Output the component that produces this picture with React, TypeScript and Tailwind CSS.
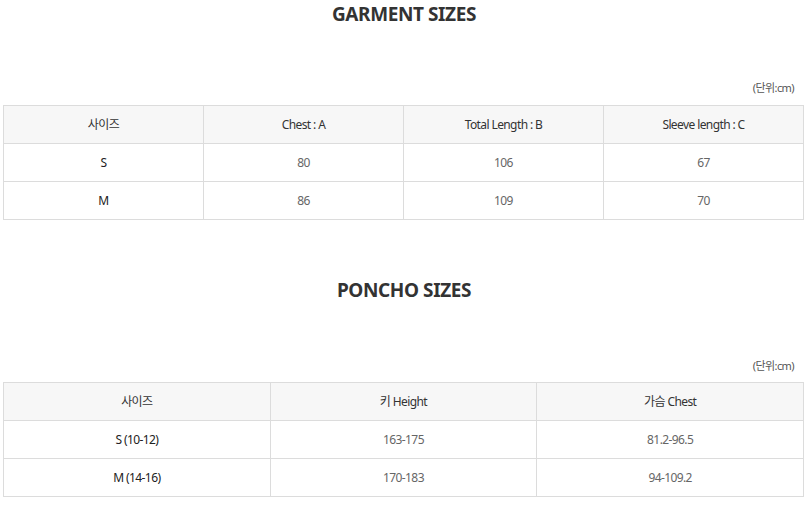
const garment = {
  head: ["사이즈", "Chest : A", "Total Length : B", "Sleeve length : C"],
  rows: [
    ["S", "80", "106", "67"],
    ["M", "86", "109", "70"],
  ],
};

const poncho = {
  head: ["사이즈", "키 Height", "가슴 Chest"],
  rows: [
    ["S (10-12)", "163-175", "81.2-96.5"],
    ["M (14-16)", "170-183", "94-109.2"],
  ],
};

function SizeTable({ head, rows }: { head: string[]; rows: string[][] }) {
  return (
    <table className="w-[801px] ml-[3px] border-collapse table-fixed text-[12px] tracking-[-0.6px]">
      <thead>
        <tr className="bg-[#f7f7f7]">
          {head.map((h) => (
            <th key={h} className="h-[38px] border border-[#dcdcdc] font-normal text-[#333]">
              {h}
            </th>
          ))}
        </tr>
      </thead>
      <tbody>
        {rows.map((r) => (
          <tr key={r[0]}>
            {r.map((c, i) => (
              <td
                key={i}
                className={`h-[38px] border border-[#dcdcdc] text-center ${i === 0 ? "text-[#222]" : "text-[#666]"}`}
              >
                {c}
              </td>
            ))}
          </tr>
        ))}
      </tbody>
    </table>
  );
}

export default function App() {
  return (
    <div
      className="w-[808px] h-[520px] bg-white overflow-hidden"
      style={{ fontFamily: '"Noto Sans", "Noto Sans CJK KR", sans-serif' }}
    >
      {/* GARMENT */}
      <h2 className="text-center text-[19px] leading-[28px] font-bold text-[#333] tracking-[-0.4px]">GARMENT SIZES</h2>
      <p className="mt-[52px] mb-[9px] pr-[14px] text-right text-[11px] leading-[16px] text-[#555] tracking-[-0.6px]">(단위:cm)</p>
      <SizeTable head={garment.head} rows={garment.rows} />

      {/* PONCHO */}
      <h2 className="mt-[56px] text-center text-[19px] leading-[28px] font-bold text-[#333] tracking-[-0.4px]">PONCHO SIZES</h2>
      <p className="mt-[54px] mb-[8px] pr-[14px] text-right text-[11px] leading-[16px] text-[#555] tracking-[-0.6px]">(단위:cm)</p>
      <SizeTable head={poncho.head} rows={poncho.rows} />
    </div>
  );
}
